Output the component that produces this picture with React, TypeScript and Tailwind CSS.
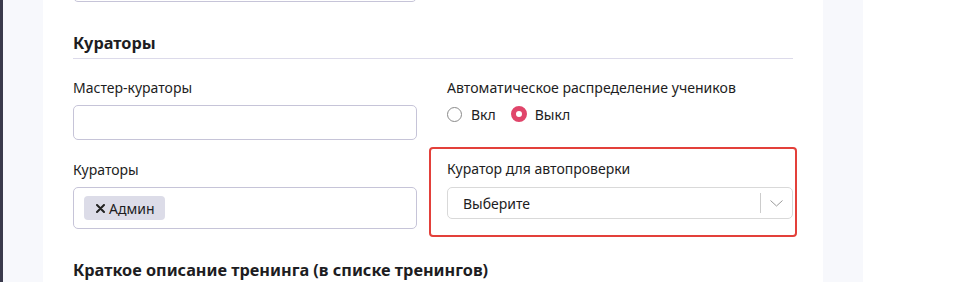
import React from "react";

export default function App() {
  return (
    <div
      className="flex w-[957px] h-[282px] overflow-hidden bg-white text-[#1d1d22]"
      style={{ fontFamily: '"Noto Sans", "Open Sans", sans-serif' }}
    >
      <div className="w-[3px] shrink-0 bg-[#3a3a4c]" />
      <div className="w-[40px] shrink-0 bg-[#f7f8fc]" />
      <div className="w-[780px] shrink-0 bg-white px-[30px]">
        <div className="w-[344px] h-[22px] -mt-[20px] rounded-[5px] border border-[#c6c4d8]" />
        <div className="mt-[29px] pb-[3px] border-b border-[#dcdaea] text-[16.3px] leading-[24px] font-bold">
          Кураторы
        </div>
        <div className="grid grid-cols-[344px_346px] gap-x-[30px] mt-[19px]">
          <div>
            <div className="text-[14px] leading-[20px]">Мастер-кураторы</div>
            <div className="mt-[7px] h-[35px] rounded-[5px] border border-[#c6c4d8]" />
          </div>
          <div>
            <div className="text-[14.1px] leading-[20px]">Автоматическое распределение учеников</div>
            <div className="mt-[6px] flex items-center h-[20px] text-[14px]">
              <span className="w-[15px] h-[15px] rounded-full border border-[#8a8a8a] bg-white" />
              <span className="ml-[9px]">Вкл</span>
              <span className="ml-[15px] w-[16px] h-[16px] rounded-full border-[5px] border-[#e0456a] bg-white" />
              <span className="ml-[8px]">Выкл</span>
            </div>
          </div>
          <div className="mt-[20px]">
            <div className="text-[14px] leading-[20px]">Кураторы</div>
            <div className="mt-[7px] h-[42px] rounded-[5px] border border-[#c6c4d8] flex items-center pl-[10px]">
              <span className="h-[24px] flex items-center rounded-[4px] bg-[#dcdce8] pl-[12px] pr-[11px] text-[14px]">
                <svg width="9" height="9" viewBox="0 0 9 9" className="mr-[4px]">
                  <path d="M1 1 L8 8 M8 1 L1 8" stroke="#222" strokeWidth="2" strokeLinecap="round" />
                </svg>
                Админ
              </span>
            </div>
          </div>
          <div className="mt-[20px] relative">
            <div className="absolute -top-[13px] -left-[18px] -right-[4px] h-[90px] rounded-[4px] border-2 border-[#e3403a] pointer-events-none" />
            <div className="text-[14px] leading-[20px] -mt-[1px]">Куратор для автопроверки</div>
            <div className="mt-[8px] h-[32px] rounded-[5px] border border-[#d9d9d9] flex items-center text-[14px]">
              <span className="pl-[15px] flex-1">Выберите</span>
              <span className="w-px h-[20px] bg-[#cccccc]" />
              <span className="w-[31px] flex justify-center">
                <svg width="13" height="7" viewBox="0 0 13 7">
                  <path d="M0.5 0.5 L6.5 6 L12.5 0.5" fill="none" stroke="#9a9a9a" strokeWidth="1" />
                </svg>
              </span>
            </div>
          </div>
        </div>
        <div className="mt-[29px] text-[16.3px] leading-[24px] font-bold">
          Краткое описание тренинга (в списке тренингов)
        </div>
      </div>
      <div className="w-[40px] shrink-0 bg-[#f7f8fc]" />
      <div className="flex-1 bg-white" />
    </div>
  );
}
